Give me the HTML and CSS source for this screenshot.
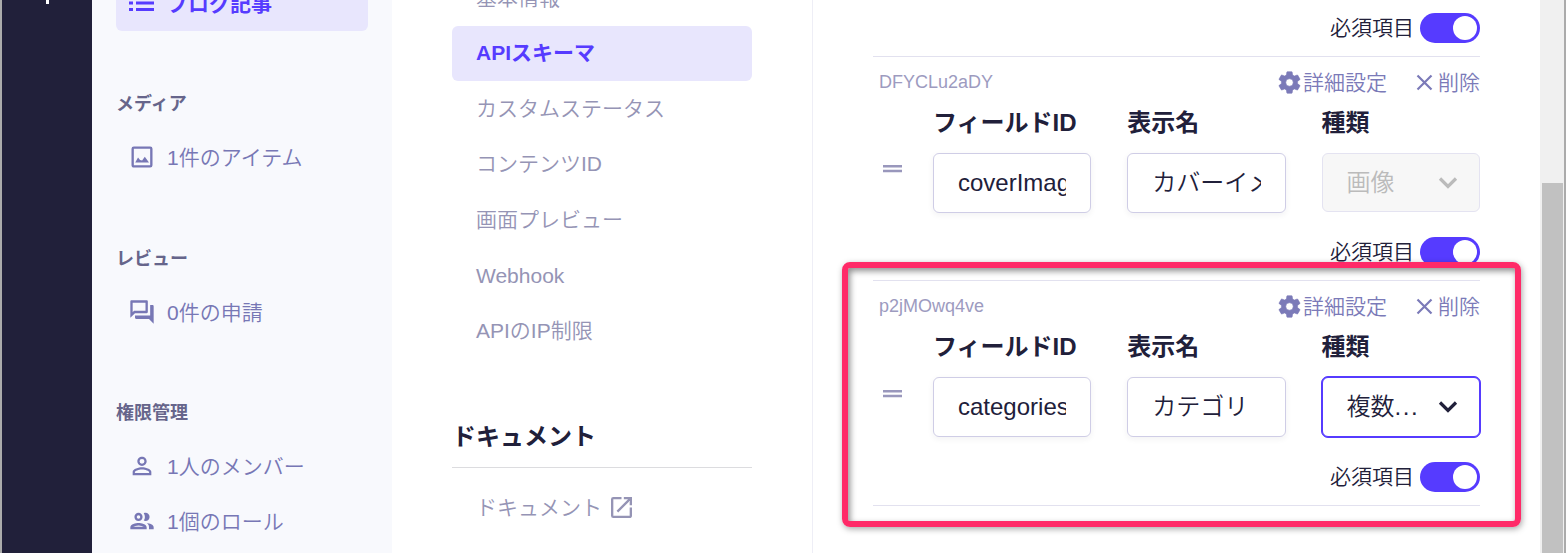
FILE: index.html
```html
<!DOCTYPE html>
<html lang="ja">
<head>
<meta charset="utf-8">
<title>APIスキーマ</title>
<link rel="stylesheet" href="styles.css">
</head>
<body>
<svg class="defs" width="0" height="0">
  <symbol id="gear" viewBox="0 0 24 24"><path d="M19.14 12.94c.04-.3.06-.61.06-.94 0-.32-.02-.64-.07-.94l2.03-1.58a.49.49 0 0 0 .12-.61l-1.92-3.32a.49.49 0 0 0-.59-.22l-2.39.96c-.5-.38-1.03-.7-1.62-.94l-.36-2.54a.48.48 0 0 0-.48-.41h-3.84c-.24 0-.43.17-.47.41l-.36 2.54c-.59.24-1.13.57-1.62.94l-2.39-.96a.48.48 0 0 0-.59.22L2.74 8.87a.48.48 0 0 0 .12.61l2.03 1.58c-.05.3-.09.63-.09.94s.02.64.07.94l-2.03 1.58a.49.49 0 0 0-.12.61l1.92 3.32c.12.22.37.29.59.22l2.39-.96c.5.38 1.03.7 1.62.94l.36 2.54c.05.24.24.41.48.41h3.84c.24 0 .44-.17.47-.41l.36-2.54c.59-.24 1.13-.56 1.62-.94l2.39.96c.22.08.47 0 .59-.22l1.92-3.32a.48.48 0 0 0-.12-.61zM12 15.3A3.300 3.300 0 1 1 12 8.700a3.300 3.300 0 0 1 0 6.600z" stroke="currentColor" stroke-width=".5"/></symbol>
  <symbol id="close" viewBox="0 0 17 17"><path d="M1.500 1.500l14 14M15.500 1.500l-14 14" fill="none" stroke="currentColor" stroke-width="2.200"/></symbol>
  <symbol id="chevron" viewBox="0 0 20 14"><path d="M2 2.500l8 8 8-8" fill="none" stroke="currentColor" stroke-width="3.200"/></symbol>
  <symbol id="handle" viewBox="0 0 19 8"><path d="M0 0h19v2.500H0zM0 4.700h19v2.500H0z"/></symbol>
</svg>
<div class="app">
  <div class="rail"><span class="rail-mark"></span></div>
  <nav class="sidebar">
    <a class="nav-item active"><svg class="icon list" viewBox="0 0 25 18"><path d="M0 0h4v3H0zM7 0h18v3H7zM0 7.500h4v3H0zM7 7.500h18v3H7zM0 14h4v3H0zM7 14h18v3H7z"/></svg><span>ブログ記事</span></a>
    <h3>メディア</h3>
    <a class="nav-item"><svg class="icon" viewBox="0 0 24 24"><path d="M19 3H5a2 2 0 0 0-2 2v14c0 1.100.9 2 2 2h14a2 2 0 0 0 2-2V5a2 2 0 0 0-2-2zm0 16H5V5h14zM10.300 14.500l-1.700-2L6.200 16.800h11.800l-3.600-5-2.300 3.200z"/></svg><span>1件のアイテム</span></a>
    <h3>レビュー</h3>
    <a class="nav-item"><svg class="icon" viewBox="0 0 24 24"><path d="M15 4v7H5.170L4 12.170V4h11m1-2H3c-.55 0-1 .45-1 1v14l4-4h10c.55 0 1-.45 1-1V3c0-.55-.45-1-1-1zm5 4h-2v9H6v2c0 .55.45 1 1 1h11l4 4V7c0-.55-.45-1-1-1z"/></svg><span>0件の申請</span></a>
    <h3>権限管理</h3>
    <a class="nav-item"><svg class="icon" viewBox="0 0 24 24"><path d="M12 5.900a2.100 2.100 0 1 1 0 4.200 2.100 2.100 0 0 1 0-4.200m0 9c2.970 0 6.100 1.460 6.100 2.100v1.100H5.900V17c0-.64 3.130-2.100 6.100-2.100M12 4C9.790 4 8 5.790 8 8s1.790 4 4 4 4-1.790 4-4-1.790-4-4-4zm0 9c-2.670 0-8 1.340-8 4v3h16v-3c0-2.660-5.330-4-8-4z"/></svg><span>1人のメンバー</span></a>
    <a class="nav-item last"><svg class="icon" viewBox="0 0 24 24"><path d="M9 13.750c-2.340 0-7 1.170-7 3.500V19h14v-1.750c0-2.330-4.660-3.500-7-3.500zM4.340 17c.84-.58 2.870-1.250 4.660-1.250s3.820.67 4.660 1.250zM9 12c1.930 0 3.500-1.570 3.500-3.500S10.930 5 9 5 5.500 6.570 5.500 8.500 7.070 12 9 12zm0-5a1.500 1.500 0 1 1 0 3 1.500 1.500 0 0 1 0-3zm7.040 6.810c1.160.84 1.960 1.960 1.960 3.440V19h4v-1.750c0-2.020-3.500-3.170-5.960-3.440zM15 12c1.930 0 3.500-1.570 3.500-3.500S16.930 5 15 5c-.54 0-1.040.13-1.500.35.63.89 1 1.980 1 3.150s-.37 2.260-1 3.150c.46.22.96.35 1.500.35z"/></svg><span>1個のロール</span></a>
  </nav>
  <nav class="submenu">
    <a class="sub-item">基本情報</a>
    <a class="sub-item active">APIスキーマ</a>
    <a class="sub-item">カスタムステータス</a>
    <a class="sub-item">コンテンツID</a>
    <a class="sub-item">画面プレビュー</a>
    <a class="sub-item latin">Webhook</a>
    <a class="sub-item">APIのIP制限</a>
    <h2>ドキュメント</h2>
    <a class="sub-item doc"><span>ドキュメント</span><svg class="icon external" viewBox="3 3 18 18"><path d="M19 19H5V5h7V3H5a2 2 0 0 0-2 2v14a2 2 0 0 0 2 2h14c1.100 0 2-.9 2-2v-7h-2zM14 3v2h3.590l-9.830 9.830 1.410 1.410L19 6.410V10h2V3z"/></svg></a>
  </nav>
  <main class="schema">
    <div class="required first"><span>必須項目</span><span class="toggle"></span></div>
    <section class="field">
      <div class="field-head"><span class="field-id">DFYCLu2aDY</span><a class="action"><svg class="gear"><use href="#gear"/></svg><span>詳細設定</span></a><a class="action remove"><svg class="close"><use href="#close"/></svg><span>削除</span></a></div>
      <div class="field-body">
        <svg class="handle"><use href="#handle"/></svg>
        <div class="cell"><label>フィールドID</label><div class="input latin"><span>coverImage</span></div></div>
        <div class="cell"><label>表示名</label><div class="input"><span>カバーイメージ</span></div></div>
        <div class="cell"><label>種類</label><div class="select disabled"><span>画像</span><svg class="chevron"><use href="#chevron"/></svg></div></div>
      </div>
      <div class="required"><span>必須項目</span><span class="toggle"></span></div>
    </section>
    <section class="field second">
      <div class="field-head"><span class="field-id">p2jMOwq4ve</span><a class="action"><svg class="gear"><use href="#gear"/></svg><span>詳細設定</span></a><a class="action remove"><svg class="close"><use href="#close"/></svg><span>削除</span></a></div>
      <div class="field-body">
        <svg class="handle"><use href="#handle"/></svg>
        <div class="cell"><label>フィールドID</label><div class="input latin"><span>categories</span></div></div>
        <div class="cell"><label>表示名</label><div class="input"><span>カテゴリ</span></div></div>
        <div class="cell"><label>種類</label><div class="select focused"><span>複数<span class="dots">...</span></span><svg class="chevron"><use href="#chevron"/></svg></div></div>
      </div>
      <div class="required"><span>必須項目</span><span class="toggle"></span></div>
    </section>
    <div class="highlight"></div>
  </main>
  <div class="scrollbar"><div class="thumb"></div></div>
</div>
</body>
</html>
```
FILE: styles.css
```css
* { box-sizing: border-box; }
body {
  margin: 0;
  overflow: hidden;
  background: #fff;
  color: #21203a;
  font-family: "Liberation Sans", "Noto Sans CJK JP", sans-serif;
  font-size: 21px;
  font-weight: 350;
}
svg { fill: currentColor; flex: none; }
.defs { display: none; }
.app {
  display: flex;
  height: 553px;
  overflow: hidden;
  border-left: 2px solid #ababab;
  border-right: 2px solid #ababab;
}
.rail { width: 90px; flex: none; background: #21203a; padding-left: 44px; }
.rail-mark { display: block; width: 3px; height: 4px; background: #fff; }

.sidebar { width: 300px; flex: none; background: #f8f9fd; padding: 0 24px; }
.sidebar h3 {
  margin: 63px 0 14px;
  height: 24px;
  line-height: 24px;
  font-size: 18px;
  color: #66658b;
}
.sidebar h3:last-of-type { margin-top: 62px; }
.sidebar .active + h3 { margin-top: 61px; }
.nav-item {
  display: flex;
  align-items: center;
  height: 54px;
  padding-left: 12px;
  gap: 11px;
  color: #7777b5;
  white-space: nowrap;
}
.nav-item > span { padding-bottom: 3px; }
.nav-item.last { margin-top: 1px; }
.nav-item .icon { width: 28px; height: 28px; }
.nav-item.active {
  height: 56px;
  margin-top: -25px;
  padding-left: 13px;
  gap: 13px;
  background: #e8e6fd;
  border-radius: 6px;
  color: #563bff;
  font-weight: 700;
}
.nav-item .list { width: 25px; height: 18px; }

.submenu {
  width: 421px;
  flex: none;
  padding: 0 60px;
  border-right: 1px solid #eeeef6;
}
.sub-item {
  display: flex;
  align-items: center;
  height: 55px;
  margin-bottom: 0.5px;
  padding: 0 0 5px 24px;
  color: #9594b5;
  white-space: nowrap;
}
.sub-item.latin { padding-bottom: 0; }
.sub-item.doc { padding-bottom: 0; }
.sub-item.doc > span { padding-bottom: 3px; }
.sub-item:first-child { margin-top: -29.5px; }
.sub-item.active {
  background: #e8e6fd;
  border-radius: 6px;
  color: #563bff;
  font-weight: 700;
}
.submenu h2 {
  margin: 53px 0 12px;
  height: 56px;
  line-height: 49px;
  font-size: 24px;
  border-bottom: 1px solid #dcdcdf;
}
.external { width: 21px; height: 21px; margin-left: 9px; }

.schema { position: relative; width: 727px; flex: none; padding: 13px 60px 0; }
.required {
  display: flex;
  align-items: center;
  justify-content: flex-end;
  gap: 6px;
  height: 30px;
  margin: 24px 0 13px;
}
.required > span:first-child { padding-bottom: 5px; }
.required.first { margin-top: 0; }
.toggle { width: 60px; height: 30px; padding: 3px; border-radius: 15px; background: #563bff; }
.toggle::before {
  content: "";
  display: block;
  width: 24px;
  height: 24px;
  margin-left: 30px;
  border-radius: 50%;
  background: #fff;
}
.field { border-top: 1px solid #e2e1ef; }
.field.second { border-bottom: 1px solid #e2e1ef; }
.second .required { margin-top: 25px; }
.field-head { display: flex; align-items: center; height: 50px; padding-left: 6px; color: #7b7ab8; }
.field-id { flex: 1; font-size: 18px; color: #9d9bbf; }
.action { display: flex; align-items: center; }
.action > span { padding-bottom: 3px; }
.gear { width: 27px; height: 27px; }
.close { width: 17px; height: 17px; margin-right: 5px; }
.remove { margin-left: 29px; }
.field-body { display: flex; gap: 36px; }
.handle { width: 19px; height: 8px; margin: 58px -5px 0 10px; color: #9997bc; }
.second .handle { margin-top: 59px; }
.cell { width: 158.3px; flex: none; }
label { display: block; height: 30px; line-height: 31px; margin-bottom: 16px; font-size: 24px; font-weight: 700; }
.input, .select {
  display: flex;
  align-items: center;
  height: 60px;
  padding: 0 24px;
  border: 1px solid #cfcde6;
  border-radius: 6px;
  background: #fff;
  font-size: 24px;
  white-space: nowrap;
}
.input { box-shadow: 0 2px 6px rgba(33, 32, 58, 0.06); }
.input > span { overflow: hidden; width: 109px; padding-bottom: 6px; }
.input.latin > span { padding-bottom: 0; }
.select { justify-content: space-between; padding-right: 21px; }
.select > span { padding-bottom: 5px; }
.disabled { height: 59px; background: #f7f7f7; border-color: #e4e3f1; color: #bbb; }
.focused { border-color: #563bff; box-shadow: 0 0 0 0.5px #563bff; outline: 0.5px solid #563bff; }
.chevron { width: 20px; height: 14px; }
.dots { letter-spacing: 1.5px; }

.highlight {
  position: absolute;
  left: 28.5px;
  top: 262px;
  width: 679px;
  height: 264.5px;
  border: 6px solid #ff2a68;
  border-radius: 8px;
  box-shadow: 1px 2px 6px rgba(0, 0, 0, 0.35), inset 2px 3px 6px rgba(0, 0, 0, 0.45);
}
.scrollbar { flex: 1; background: #f0f0f0; padding: 183px 1px 0 2px; }
.thumb { height: 370px; background: #c1c1c1; }
```
